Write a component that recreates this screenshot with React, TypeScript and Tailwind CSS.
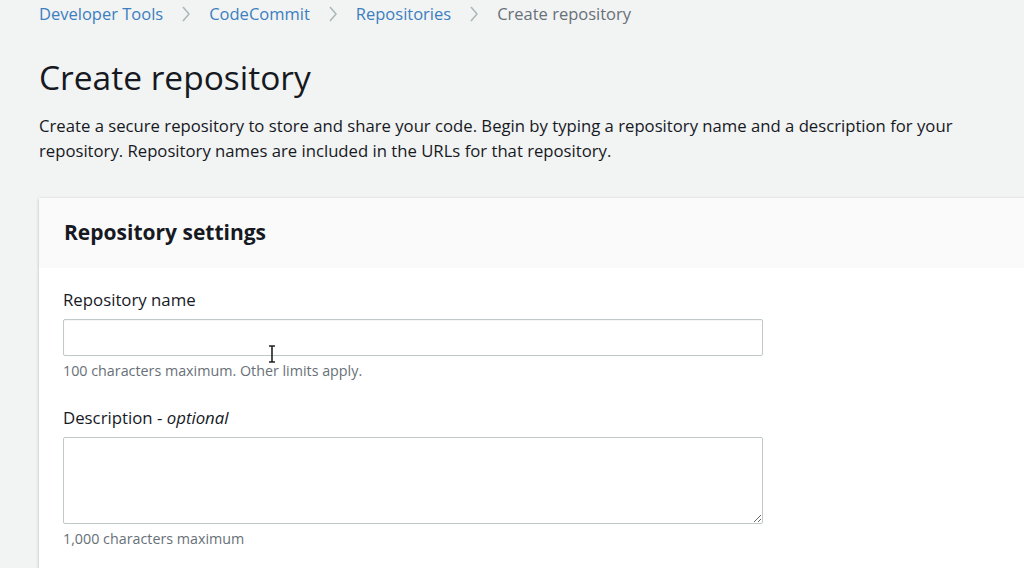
const crumbs = ["Developer Tools", "CodeCommit", "Repositories"];

function Chevron() {
  return (
    <svg width="12" height="20" viewBox="0 0 12 20" className="mx-[17px]" fill="none">
      <path d="M3 3 L9 10 L3 17" stroke="#aab7b8" strokeWidth="1.5" />
    </svg>
  );
}

// text cursor hovering over the name field
function IBeam() {
  return (
    <svg width="8" height="18" viewBox="0 0 8 18" className="absolute left-[205px] top-[26px]" fill="none">
      <path d="M1 1 H7 M4 1 V17 M1 17 H7" stroke="#222" strokeWidth="1.6" />
    </svg>
  );
}

export default function App() {
  return (
    <div
      className="w-[1024px] h-[568px] overflow-hidden bg-[#f2f3f3] text-[#16191f]"
      style={{ fontFamily: '"Open Sans", "Liberation Sans", sans-serif' }}
    >
      <div className="pl-[39px]">
        {/* Breadcrumbs */}
        <nav className="flex items-center h-[28px] text-[16.5px]">
          {crumbs.map((c) => (
            <span key={c} className="flex items-center">
              <a className="text-[#3b7fc0]">{c}</a>
              <Chevron />
            </span>
          ))}
          <span className="text-[#687078]">Create repository</span>
        </nav>

        <h1 className="mt-[29px] text-[33.5px] leading-[40px] font-normal text-[#16191f]">Create repository</h1>

        <p className="mt-[16px] w-[980px] text-[16.7px] leading-[25px] text-[#16191f]">
          Create a secure repository to store and share your code. Begin by typing a repository name and a description for your
          <br />
          repository. Repository names are included in the URLs for that repository.
        </p>

        {/* Card */}
        <div className="mt-[35px] w-[1010px] bg-white shadow-[0_1px_3px_rgba(0,28,36,0.25)]">
          <div className="h-[70px] bg-[#fafafa] flex items-center px-[25px]">
            <h2 className="text-[21px] font-bold text-[#16191f]">Repository settings</h2>
          </div>
          <div className="px-[24px] pt-[21px] pb-[40px]">
            <label className="block text-[16.8px] leading-[22px] text-[#16191f]">Repository name</label>
            <div className="relative">
              <input
                className="mt-[8px] block w-[700px] h-[37px] border border-[#c0c8c9] rounded-[2px] bg-white outline-none shadow-[inset_0_1px_1px_rgba(0,0,0,0.04)]"
                type="text"
              />
              <IBeam />
            </div>
            <div className="mt-[6px] text-[14.3px] leading-[18px] text-[#687078]">100 characters maximum. Other limits apply.</div>

            <label className="block mt-[27px] text-[16.8px] leading-[22px] text-[#16191f]">
              Description - <i>optional</i>
            </label>
            <textarea className="mt-[8px] block w-[700px] h-[87px] border border-[#c0c8c9] rounded-[2px] bg-white outline-none" />
            <div className="mt-[6px] text-[14.3px] leading-[18px] text-[#687078]">1,000 characters maximum</div>
          </div>
        </div>
      </div>
    </div>
  );
}
